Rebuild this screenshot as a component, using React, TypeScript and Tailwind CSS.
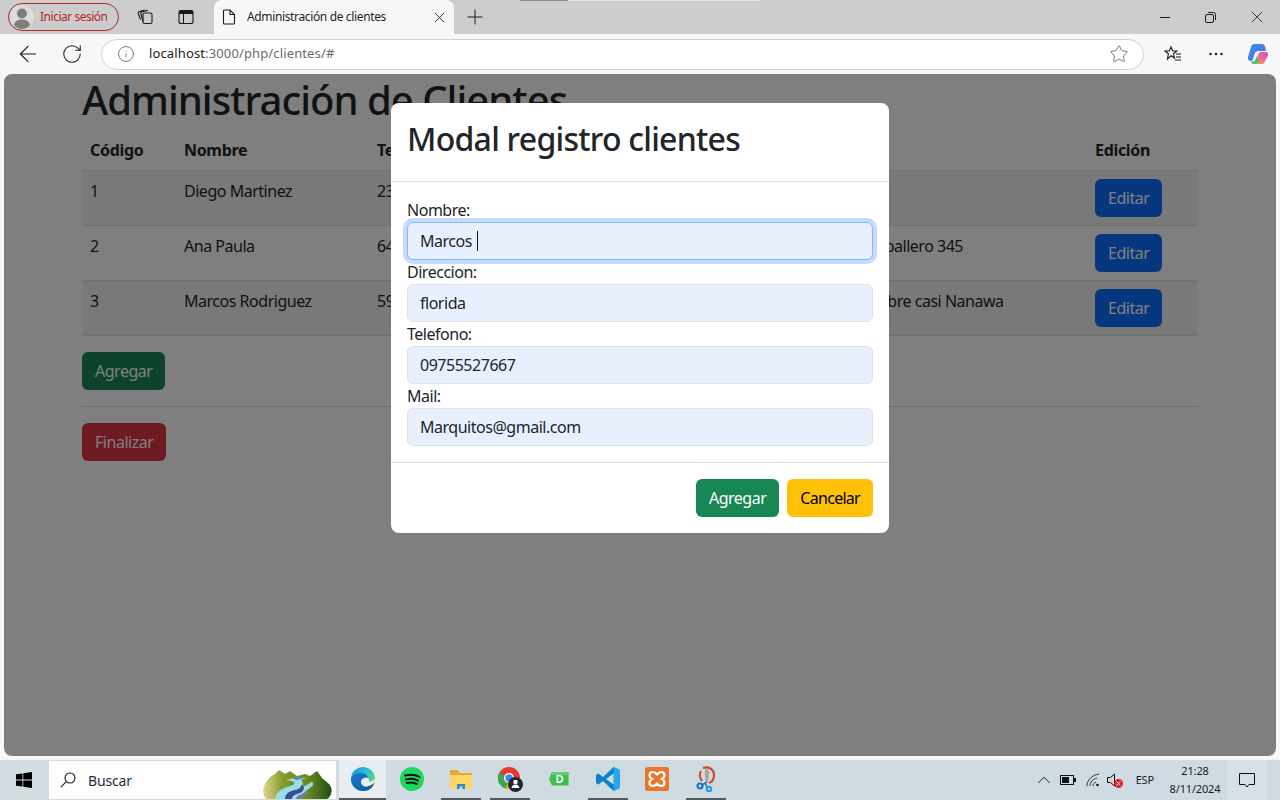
import { ArrowLeft, ChevronUp, Info, Plus, RotateCw, Star, X } from 'lucide-react';
import type { ReactNode } from 'react';

const clientes = [
    { id: 1, nombre: 'Diego Martinez', tel: '2345678', mail: 'diego@gmail.com', dir: 'Asuncion' },
    { id: 2, nombre: 'Ana Paula', tel: '6456789', mail: 'ana@gmail.com', dir: 'Avda. Gral. N. Caballero 345' },
    { id: 3, nombre: 'Marcos Rodriguez', tel: '5956789', mail: 'marcos@gmail.com', dir: 'Avd. Pettirossi sobre casi Nanawa' },
];

const campos = [
    { label: 'Nombre:', value: 'Marcos', focused: true },
    { label: 'Direccion:', value: 'florida', focused: false },
    { label: 'Telefono:', value: '09755527667', focused: false },
    { label: 'Mail:', value: 'Marquitos@gmail.com', focused: false },
];

function TabStrip() {
    return (
        <div className="flex h-[34px] items-center bg-[#cdcdcd] relative">
            <div className="absolute top-0 left-[520px] h-px w-[48px] bg-[#8a8a8a]" />
            <div className="absolute top-0 left-[568px] h-px w-[192px] bg-[#e4e4e4]" />

            {/* Perfil */}
            <div className="ml-2 flex h-[28px] w-[111px] items-center rounded-full border border-[#b3262c] pl-[1px]">
                <svg width="24" height="24" viewBox="0 0 24 24">
                    <circle cx="12" cy="12" r="12" fill="#dcdcdc" />
                    <circle cx="12" cy="8.500" r="5" fill="#7d7d7d" />
                    <path d="M4 20c1-4 4-5.500 8-5.500s7 1.500 8 5.500c-2 2.500-5 4-8 4s-6-1.500-8-4z" fill="#7d7d7d" />
                </svg>
                <span className="ml-[6px] text-[12px] tracking-[-0.04em] text-[#b3262c]">Iniciar sesión</span>
            </div>

            {/* Colecciones */}
            <svg className="ml-[17px]" width="18" height="18" viewBox="0 0 18 18" fill="none" stroke="#1a1a1a" strokeWidth="1.100">
                <rect x="7" y="5" width="9" height="10.500" rx="1.500" />
                <path d="M7 13.500 4.800 5.500a1.300 1.300 0 0 1 .9-1.600L12 2.300" />
                <path d="M4.500 11.500 2.200 5.200a1.200 1.200 0 0 1 .8-1.500L8.500 2" />
            </svg>

            {/* Pestañas verticales */}
            <svg className="ml-[24px]" width="16" height="16" viewBox="0 0 16 16" fill="none">
                <rect x="1" y="1.500" width="14" height="13" rx="2" stroke="#1a1a1a" strokeWidth="1.100" />
                <path d="M1 2.500a1 1 0 0 1 1-1h12a1 1 0 0 1 1 1v2.500H1z" fill="#1a1a1a" />
                <path d="M5.500 5v9" stroke="#1a1a1a" />
            </svg>

            {/* Pestaña activa */}
            <div className="ml-[20px] flex h-[34px] w-[240px] items-center rounded-t-lg bg-[#f7f7f7] pl-[9px]">
                <svg width="14" height="16" viewBox="0 0 14 16" fill="none" stroke="#1a1a1a" strokeWidth="1.100" className="ml-[-1px]">
                    <path d="M2.500 1h5.500l4.500 4.500v8.500a1 1 0 0 1-1 1h-9a1 1 0 0 1-1-1v-12a1 1 0 0 1 1-1z" />
                    <path d="M8 1v4.500h4.500" />
                </svg>
                <span className="ml-[11px] w-[184px] text-[12px] tracking-[-0.03em] text-[#1f1f1f]">Administración de clientes</span>
                <X size={17} strokeWidth={1.200} className="text-[#1a1a1a]" />
            </div>

            <Plus size={24} strokeWidth={1} className="ml-[9px] text-[#1a1a1a]" />

            {/* Controles de ventana */}
            <div className="ml-auto flex items-center">
                <svg width="10" height="10" viewBox="0 0 10 10" className="mr-[35px]">
                    <path d="M0 5.500h10" stroke="#1a1a1a" />
                </svg>
                <svg width="11" height="11" viewBox="0 0 11 11" fill="none" stroke="#1a1a1a" className="mr-[31px]">
                    <rect x=".5" y="2.500" width="8" height="8" rx="1.500" />
                    <path d="M3 .5h5.500a2 2 0 0 1 2 2V8" />
                </svg>
                <X size={20} strokeWidth={1} className="mr-[13px] text-[#1a1a1a]" />
            </div>
        </div>
    );
}

function Toolbar() {
    return (
        <div className="flex h-[40px] items-center bg-[#f7f7f7]">
            <ArrowLeft size={26} strokeWidth={1} className="ml-[15px] text-[#1a1a1a]" />
            <RotateCw size={22} strokeWidth={1.100} className="ml-[20px] text-[#1a1a1a]" />
            <div className="ml-[18px] flex h-[31px] w-[1043px] items-center rounded-full border border-[#cfcfcf] bg-white">
                <Info size={18} strokeWidth={1.100} className="ml-[15px] text-[#5f5f5f]" />
                <span className="ml-[14px] text-[13px] tracking-[0.01em] text-[#1a1a1a]">
                    localhost<span className="text-[#6b6b6b]">:3000/php/clientes/#</span>
                </span>
                <Star size={20} strokeWidth={1} className="ml-auto mr-[14px] text-[#5f5f5f]" />
            </div>

            {/* Favoritos */}
            <svg className="ml-[20px]" width="18" height="18" viewBox="0 0 18 18" fill="none" stroke="#1a1a1a" strokeWidth="1.100">
                <path d="M7 2 8.700 6h4.100l-3.300 2.800 1 4.200L7 10.800 3.400 14l1-5.200L1 6h4.300z" />
                <path d="M12 9h5M12 12h5M11 15h6" />
            </svg>
            <svg className="ml-[26px]" width="16" height="4" viewBox="0 0 16 4" fill="#1a1a1a">
                <circle cx="2.500" cy="2" r="1.200" />
                <circle cx="8" cy="2" r="1.200" />
                <circle cx="13.500" cy="2" r="1.200" />
            </svg>

            {/* Copilot */}
            <svg className="ml-[23px]" width="22" height="22" viewBox="0 0 22 22">
                <defs>
                    <linearGradient id="cp1" x1="0" y1="0" x2="1" y2="1">
                        <stop offset="0" stopColor="#1d9be8" />
                        <stop offset="1" stopColor="#7a5be6" />
                    </linearGradient>
                    <linearGradient id="cp2" x1="0" y1="1" x2="1" y2="0">
                        <stop offset="0" stopColor="#f4b62a" />
                        <stop offset=".6" stopColor="#f0609a" />
                        <stop offset="1" stopColor="#b45ee0" />
                    </linearGradient>
                </defs>
                <path d="M7 1h8c1.500 0 2.500 1 3 2.500L19 8h-7C9 8 8 9.500 7.500 11L6 16c-.5 1.500-1.500 2-3 2-1.500-.5-2.500-2-2-4L4 4c.5-2 1.500-3 3-3z" fill="url(#cp1)" />
                <path d="M15 21H7c-1.500 0-2.500-1-3-2.500h3c1.500 0 2.500-1 3-2.500l1.500-5c.5-1.500 1.500-2 3-2H19c1.500 0 2.500 1.500 2 3.500L18 18c-.5 2-1.500 3-3 3z" fill="url(#cp2)" />
                <path d="M4 18.500c2 .5 4 0 5-3l1-3 2 6-3 2.500H7c-1.500 0-2.500-1-3-2.500z" fill="#3fc36b" />
            </svg>
        </div>
    );
}

function BootstrapButton({ label, color }: { label: string; color: string }) {
    return <button className={`h-[38px] rounded-md border border-transparent px-3 text-base ${color}`}>{label}</button>;
}

function Pagina() {
    return (
        <div className="mx-auto w-[1116px] text-[#212529]">
            <h1 className="mb-2 h-12 text-[40px] leading-[52px] font-medium tracking-[-0.0245em]">Administración de Clientes</h1>
            <table className="mb-4 w-full table-fixed text-left">
                <colgroup>
                    <col className="w-[94px]" />
                    <col className="w-[193px]" />
                    <col className="w-[190px]" />
                    <col className="w-[201px]" />
                    <col className="w-[327px]" />
                    <col className="w-[111px]" />
                </colgroup>
                <thead>
                    <tr className="border-b border-[#dee2e6] tracking-[-0.02em]">
                        <th className="p-2 font-bold">Código</th>
                        <th className="p-2 font-bold">Nombre</th>
                        <th className="p-2 font-bold">Teléfono</th>
                        <th className="p-2 font-bold">Mail</th>
                        <th className="p-2 font-bold">Dirección</th>
                        <th className="p-2 font-bold">Edición</th>
                    </tr>
                </thead>
                <tbody>
                    {clientes.map((c) => (
                        <tr key={c.id} className="border-b border-[#dee2e6] odd:bg-black/5">
                            <td className="p-2 align-top">{c.id}</td>
                            <td className="p-2 align-top">{c.nombre}</td>
                            <td className="p-2 align-top">{c.tel}</td>
                            <td className="p-2 align-top">{c.mail}</td>
                            <td className="p-2 align-top whitespace-nowrap">{c.dir}</td>
                            <td className="p-2 align-top">
                                <BootstrapButton label="Editar" color="bg-[#0d6efd] text-white" />
                            </td>
                        </tr>
                    ))}
                </tbody>
            </table>
            <BootstrapButton label="Agregar" color="bg-[#198754] text-white" />
            <hr className="my-4 border-[#dcdcdc]" />
            <BootstrapButton label="Finalizar" color="bg-[#dc3545] text-white" />
        </div>
    );
}

function Modal() {
    return (
        <div className="absolute top-[29px] left-[387px] w-[498px] rounded-lg bg-white text-[#212529]">
            <div className="flex h-[79px] items-center border-b border-[#dee2e6] px-4 pb-[7px]">
                <h2 className="text-[32px] leading-[38px] font-medium tracking-[-0.023em]">Modal registro clientes</h2>
            </div>
            <div className="border-b border-[#dee2e6] p-4">
                {campos.map((campo) => (
                    <div key={campo.label}>
                        <div className="h-6 text-base leading-[25px]">{campo.label}</div>
                        <div
                            className={`flex h-[38px] items-center rounded-md border bg-[#e8f0fe] px-3 ${
                                campo.focused ? 'border-[#86b7fe] shadow-[0_0_0_4px_rgba(13,110,253,0.25)]' : 'border-[#dee2e6]'
                            }`}
                        >
                            <span className="text-[#212529]">{campo.value}</span>
                            {campo.focused && <span className="ml-[5px] h-[20px] w-px bg-[#111]" />}
                        </div>
                    </div>
                ))}
            </div>
            <div className="flex justify-end gap-2 p-4">
                <BootstrapButton label="Agregar" color="bg-[#198754] text-white" />
                <BootstrapButton label="Cancelar" color="bg-[#ffc107] text-black tracking-[-0.045em]" />
            </div>
        </div>
    );
}

function AppTile({ active, children }: { active?: boolean; children: ReactNode }) {
    return (
        <div className="flex h-[40px] w-[49px] items-center justify-center">
            <div className={`flex h-[40px] w-[40px] items-center justify-center border-b-2 ${active ? 'border-[#55595d]' : 'border-transparent'}`}>
                {children}
            </div>
        </div>
    );
}

function Taskbar() {
    return (
        <div className="flex h-[40px] items-center bg-[linear-gradient(90deg,#d3dce1,#cedbe1_50%,#cfdbe2)] tracking-[-0.01em]">
            <svg className="ml-[16px]" width="16" height="16" viewBox="0 0 16 16" fill="#000">
                <path d="M0 2.300 6.500 1.400v6.200H0zM7.300 1.300 16 0v7.600H7.300zM0 8.400h6.500v6.200L0 13.700zM7.300 8.400H16V16l-8.700-1.200z" />
            </svg>

            {/* Buscador */}
            <div className="relative ml-[17px] flex h-[38px] w-[287px] items-center bg-white">
                <svg className="ml-[11px]" width="16" height="16" viewBox="0 0 16 16" fill="none" stroke="#1a1a1a" strokeWidth="1.100">
                    <circle cx="10" cy="6" r="5" />
                    <path d="M6.300 9.700.8 15.200" />
                </svg>
                <span className="ml-[12px] text-[14px] text-[#1f2b3a]">Buscar</span>
                <svg className="absolute right-[4px] bottom-0" width="69" height="32" viewBox="0 0 69 32">
                    <defs>
                        <linearGradient id="monte" x1="0" y1="0" x2="1" y2="0">
                            <stop offset="0" stopColor="#e5d694" />
                            <stop offset=".3" stopColor="#7f9a27" />
                            <stop offset=".65" stopColor="#6c8a1e" />
                            <stop offset="1" stopColor="#1f4d17" />
                        </linearGradient>
                    </defs>
                    <path d="M0 24C1 15 7 9 12 7l4-4 6 4 5-3 7 5 8-2 5 2 7-5 5 7 7 6c3 4 3 7 2 10-1 3-3 5-5 5H3C1 29 0 27 0 24z" fill="url(#monte)" />
                    <path d="M12 32c1-8 8-11 15-13 5-1 6-3 2-5l-6-1 12-3 8 1-5 2c3 3 2 6-2 8 4-1 9-3 12-6 3 0 3 3 0 5-5 4-9 6-11 12z" fill="#9bdcea" />
                    <path d="M22 32c0-5 4-8 10-9 4-1 6-2 6-5l3 2c0 4-3 6-7 7-3 1-5 2-5 5z" fill="#37508f" />
                    <path d="M33 32c0-2 2-4 6-5l6-3c1 2-1 3-3 4-2 1-3 2-3 4z" fill="#6d7fae" />
                    <path d="M30 11l8-1 3 1-8 2z" fill="#5a73a8" />
                </svg>
            </div>

            {/* Aplicaciones */}
            <div className="ml-[3px] flex h-[40px] w-[47px] items-center justify-center border-b-2 border-[#55595d] bg-[#e7edf0]">
                <svg width="24" height="24" viewBox="0 0 24 24">
                    <defs>
                        <linearGradient id="edge1" x1="0" y1="0" x2="1" y2=".6">
                            <stop offset="0" stopColor="#1b8fd6" />
                            <stop offset=".55" stopColor="#2cc0d6" />
                            <stop offset="1" stopColor="#5fdc7a" />
                        </linearGradient>
                        <linearGradient id="edge2" x1="0" y1="0" x2="1" y2="1">
                            <stop offset="0" stopColor="#1a7fd0" />
                            <stop offset="1" stopColor="#0b4f9c" />
                        </linearGradient>
                    </defs>
                    <circle cx="12" cy="12" r="12" fill="url(#edge1)" />
                    <path d="M23.500 15.500c-1.500 5-6 8.500-11.500 8.500C5.500 24 0 18.500 0 12c1 -4 5-6 9-6 5 0 8 2.500 8 5-3-1-7 .5-7 4 0 3 4 5 7.500 4 2.500-.7 4.500-2 6-3.500z" fill="url(#edge2)" />
                    <path d="M17 11c-3-1-7 .5-7 4 0 2 1.500 3.500 3.500 4.500 1.500.3 3 .2 4 -.5 2.500-.7 4.500-2 6-3.500l.5-3.500c-1.500 2-4 2.500-6.500 2.500 1-1 .5-2.500-.5-3.500z" fill="#e7edf0" />
                </svg>
            </div>
            <div className="ml-[1px] flex">
                <AppTile>
                    <svg width="24" height="24" viewBox="0 0 24 24">
                        <circle cx="12" cy="12" r="12" fill="#1ed760" />
                        <path d="M5 8.500c5-1.400 10-1 14.500 1.300M6 12.500c4-1.100 8.500-.8 12 1.200M6.800 16c3.500-.9 7-.6 10 1" fill="none" stroke="#111" strokeWidth="2" strokeLinecap="round" />
                    </svg>
                </AppTile>
                <AppTile active>
                    <svg width="22" height="20" viewBox="0 0 22 20">
                        <path d="M0 2a1 1 0 0 1 1-1h7l2 3h11a1 1 0 0 1 1 1v3H0z" fill="#e6a92b" />
                        <path d="M0 6h22v13a1 1 0 0 1-1 1H1a1 1 0 0 1-1-1z" fill="#fcd667" />
                        <path d="M7 20v-5h8v5h-2.500v-2.500h-3V20z" fill="#2a87d8" />
                    </svg>
                </AppTile>
                <AppTile active>
                    <svg width="26" height="26" viewBox="0 0 26 26">
                        <circle cx="12" cy="12" r="11" fill="#e33b2e" />
                        <path d="M12 12 2.500 6.500A11 11 0 0 0 9 22.600z" fill="#36a852" />
                        <path d="M12 12 9 22.600A11 11 0 0 0 23 12z" fill="#fbbc05" />
                        <circle cx="12" cy="12" r="5" fill="#fff" />
                        <circle cx="12" cy="12" r="3.700" fill="#4285f4" />
                        <circle cx="18.500" cy="18.500" r="7.500" fill="#1f2733" />
                        <circle cx="18.500" cy="16" r="2.300" fill="#fff" />
                        <path d="M14.500 22c.5-2.500 2-3.500 4-3.500s3.500 1 4 3.500z" fill="#fff" />
                    </svg>
                </AppTile>
                <AppTile>
                    <div className="relative flex h-4 w-5 items-center justify-center">
                        <svg className="absolute inset-0" width="20" height="16" viewBox="0 0 20 16">
                            <path d="M3 1h16.500v13.500H3L0 8z" fill="#3fbf4f" />
                            <path d="M3 1h16.500v3H3z" fill="#5fd06c" />
                        </svg>
                        <span className="relative ml-[2px] text-[11px] font-semibold text-white">D</span>
                    </div>
                </AppTile>
                <AppTile active>
                    <svg width="24" height="24" viewBox="0 0 24 24">
                        <path d="M17.500 0 24 3v18l-6.500 3L7 14l-4.500 3.500L0 16V8l2.500-1.500L7 10z" fill="#0f7fc9" />
                        <path d="M17.500 0 24 3v18l-6.500 3z" fill="#2aa4ee" />
                        <path d="M17.500 6.500 10 12l7.500 5.500z" fill="#cfdbe2" />
                    </svg>
                </AppTile>
                <AppTile>
                    <svg width="24" height="24" viewBox="0 0 24 24">
                        <rect width="24" height="24" rx="2.500" fill="#e8762d" />
                        <path
                            d="M8 5c2 0 3 1.500 4 2.500 1-1 2-2.500 4-2.500 2.200 0 3.500 1.500 3.500 3.500 0 1.800-1 2.700-2.500 3.500 1.500.8 2.500 1.700 2.500 3.500 0 2-1.300 3.500-3.500 3.500-2 0-3-1.500-4-2.500-1 1-2 2.500-4 2.500-2.200 0-3.500-1.500-3.500-3.500 0-1.800 1-2.700 2.500-3.500-1.500-.8-2.500-1.700-2.500-3.500C4.500 6.500 5.800 5 8 5z"
                            fill="none"
                            stroke="#fff"
                            strokeWidth="2.200"
                        />
                    </svg>
                </AppTile>
                <AppTile active>
                    <svg width="20" height="26" viewBox="0 0 20 26" fill="none">
                        <path d="M7 2c5-2 11 1 11 7 0 4-2 7-5 8" stroke="#d9432b" strokeWidth="2.200" />
                        <path d="M5 5c-2 3-1 7 1 10" stroke="#d9432b" strokeWidth="2" />
                        <path d="M9 3l2 0 2 3-.5 8-1.500 3-2-6z" fill="#a4a4a4" />
                        <circle cx="4" cy="20" r="2.500" stroke="#1f6fc4" strokeWidth="2.200" />
                        <circle cx="13" cy="23" r="2.200" stroke="#2a9ee6" strokeWidth="2.200" />
                        <path d="M6 19l5-3M11 21l-2-4" stroke="#1f6fc4" strokeWidth="1.500" />
                    </svg>
                </AppTile>
            </div>

            {/* Bandeja del sistema */}
            <div className="ml-auto flex h-[40px] items-center">
                <ChevronUp size={22} strokeWidth={1} className="text-[#111]" />
                <svg className="ml-[5px]" width="16" height="10" viewBox="0 0 16 10">
                    <rect x=".5" y=".5" width="13" height="9" fill="none" stroke="#111" />
                    <rect x="2" y="2" width="7" height="6" fill="#111" />
                    <rect x="14" y="3" width="2" height="4" fill="#111" />
                </svg>
                <svg className="ml-[10px]" width="14" height="14" viewBox="0 0 14 14" fill="none" stroke="#333">
                    <path d="M1 13C1 7 6 2 13 1M4 13c0-4 3-7 7-8M7 13c0-2 1-3 3-4" />
                    <circle cx="11.500" cy="12" r="1.300" fill="#111" stroke="none" />
                </svg>
                <div className="relative ml-[7px] h-[14px] w-[16px]">
                    <svg width="10" height="14" viewBox="0 0 10 14" fill="none" stroke="#111">
                        <path d="M.5 4.500h3l4-3.500v12l-4-3.500h-3z" />
                    </svg>
                    <span className="absolute top-[6px] left-[7px] flex h-[9px] w-[9px] items-center justify-center rounded-full bg-[#e0202c]">
                        <X size={7} strokeWidth={3} className="text-white" />
                    </span>
                </div>
                <span className="ml-[13px] text-[11px] text-[#1a1a1a]">ESP</span>
                <div className="ml-[14px] flex w-[54px] flex-col items-center text-[11px] leading-[18px] text-[#1a1a1a]">
                    <span>21:28</span>
                    <span>8/11/2024</span>
                </div>
                <div className="ml-[5px] flex h-[40px] w-[40px] items-center justify-center bg-[#d6e0e5]">
                    <svg width="16" height="16" viewBox="0 0 16 16" fill="none" stroke="#111">
                        <path d="M.5 1.500h15v11H10L8 15l-2-2.500H.5z" />
                    </svg>
                </div>
                <div className="h-[40px] w-[13px] bg-[#d0dbe1]" />
            </div>
        </div>
    );
}

export default function App() {
    return (
        <div className="flex h-[800px] w-[1280px] flex-col overflow-hidden bg-[#f7f7f7] font-['Noto_Sans','Open_Sans',sans-serif] tracking-[-0.03em]">
            <TabStrip />
            <Toolbar />
            <main className="relative mx-1 h-[682px] overflow-hidden rounded-lg bg-white">
                <Pagina />
                <div className="absolute inset-0 bg-black/50" />
                <Modal />
            </main>
            <div className="h-1" />
            <Taskbar />
        </div>
    );
}
